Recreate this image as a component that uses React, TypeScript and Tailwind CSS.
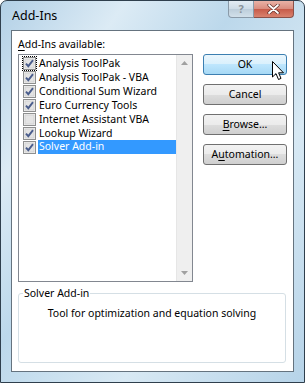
import React from "react";

interface AddIn {
  name: string;
  checked: boolean;
}

const addIns: AddIn[] = [
  { name: "Analysis ToolPak", checked: true },
  { name: "Analysis ToolPak - VBA", checked: true },
  { name: "Conditional Sum Wizard", checked: true },
  { name: "Euro Currency Tools", checked: true },
  { name: "Internet Assistant VBA", checked: false },
  { name: "Lookup Wizard", checked: true },
  { name: "Solver Add-in", checked: true },
];

function CheckBox({ checked }: { checked: boolean }) {
  return (
    <svg width="13" height="13" viewBox="0 0 13 13">
      <rect x="0.5" y="0.5" width="12" height="12" fill="#f6f6f6" stroke="#8e8f8f" />
      <rect x="2" y="2" width="9" height="9" fill="#e4e4e4" stroke="#d2d2d2" />
      {checked && (
        <path d="M3 6.6 L5.3 9.2 L10 3.2" fill="none" stroke="#4a5d8c" strokeWidth="1.9" />
      )}
    </svg>
  );
}

function Button({ children, focused }: { children: React.ReactNode; focused?: boolean }) {
  return (
    <button
      className={
        focused
          ? "h-[21px] w-[84px] rounded-[3px] border border-[#3c7fb1] bg-[linear-gradient(#eaf6fd,#d9f0fc_50%,#bee6fd_50%,#a7d9f5)] text-[10.5px] text-black"
          : "h-[21px] w-[84px] rounded-[3px] border border-[#707070] bg-[linear-gradient(#f2f2f2,#ebebeb_50%,#dddddd_50%,#cfcfcf)] text-[10.5px] text-black"
      }
    >
      {children}
    </button>
  );
}

export default function App() {
  return (
    <div className="w-[305px] h-[383px] overflow-hidden font-['Noto_Sans',sans-serif]">
      <div className="flex h-full flex-col rounded-t-[7px] border border-[#2f3f4d] bg-[linear-gradient(125deg,#b2d0e6_0%,#dcebf5_22%,#bcd8eb_42%,#d8e9f4_68%,#b6d3e8_100%)]">
        {/* Title bar */}
        <div className="flex h-[29px] shrink-0 items-start justify-between">
          <div className="pl-[11px] pt-[6px] text-[12.5px] text-black">Add-Ins</div>
          <div className="mr-[10px] flex">
            <div className="flex h-[17px] w-[26px] items-center justify-center rounded-bl-[4px] border border-t-0 border-[#8a9aa8] bg-[linear-gradient(#e3ecf3,#cddbe6_50%,#bccdda_50%,#d2e0ea)] text-[11px] font-bold text-[#8a9299]">
              ?
            </div>
            <div className="flex h-[17px] w-[40px] items-center justify-center rounded-br-[4px] border border-l-0 border-t-0 border-[#8a5048] bg-[linear-gradient(#e9b2a6,#d98c7e_50%,#c65a48_50%,#d9826e)]">
              <svg width="13" height="10" viewBox="0 0 13 10">
                <path d="M2 1 L11 9 M11 1 L2 9" stroke="#5a2a24" strokeWidth="3.2" strokeLinecap="round" />
                <path d="M2 1 L11 9 M11 1 L2 9" stroke="#ffffff" strokeWidth="1.8" strokeLinecap="round" />
              </svg>
            </div>
          </div>
        </div>

        {/* Client area */}
        <div className="mx-[10px] mb-[10px] flex flex-1 flex-col border border-[#65737f] bg-white px-[6px] pt-[6px] text-[10.5px] text-black">
          <div className="leading-[15px]">
            <span className="underline underline-offset-2">A</span>dd-Ins available:
          </div>
          <div className="mt-[2px] flex gap-[10px]">
            <div className="flex h-[228px] w-[176px] border border-[#828790]">
              <div className="flex-1 pt-[1px] pl-[3px]">
                {addIns.map((a, i) => (
                  <div key={a.name} className="flex h-[14px] items-center">
                    <div className={i === 0 ? "flex h-[15px] w-[15px] items-center justify-center outline-1 outline-dotted outline-black -outline-offset-1" : "flex h-[15px] w-[15px] items-center justify-center"}>
                      <CheckBox checked={a.checked} />
                    </div>
                    <div
                      className={
                        a.name === "Solver Add-in"
                          ? "ml-[1px] flex h-[14px] flex-1 items-center bg-[#3399ff] pl-[1px] text-white"
                          : "ml-[1px] pl-[1px] leading-[14px]"
                      }
                    >
                      {a.name}
                    </div>
                  </div>
                ))}
              </div>
              <div className="flex w-[16px] flex-col justify-between bg-[#efefef] border-l border-[#e6e6e6]">
                <div className="flex h-[16px] items-center justify-center">
                  <svg width="7" height="4" viewBox="0 0 7 4">
                    <path d="M0 4 L3.5 0 L7 4 Z" fill="#a0a0a0" />
                  </svg>
                </div>
                <div className="flex h-[16px] items-center justify-center">
                  <svg width="7" height="4" viewBox="0 0 7 4">
                    <path d="M0 0 L3.5 4 L7 0 Z" fill="#a0a0a0" />
                  </svg>
                </div>
              </div>
            </div>
            <div className="relative flex flex-col gap-[9px]">
              <Button focused>OK</Button>
              <Button>Cancel</Button>
              <Button>
                <span className="underline underline-offset-2">B</span>rowse...
              </Button>
              <Button>
                A<span className="underline underline-offset-2">u</span>tomation...
              </Button>
              <svg className="absolute left-[69px] top-[7px]" width="13" height="21" viewBox="0 0 13 21">
                <path
                  d="M0.5 0.5 L0.5 16 L4 12.6 L6.5 18.5 L9 17.4 L6.6 11.8 L11.5 11.8 Z"
                  fill="#ffffff"
                  stroke="#000000"
                  strokeWidth="1"
                  strokeLinejoin="round"
                />
              </svg>
            </div>
          </div>
          <fieldset className="mt-[5px] h-[76px] w-[268px] rounded-[3px] border border-[#d5dfe5] px-[4px]">
            <legend className="px-[1px] leading-[13px]">Solver Add-in</legend>
            <div className="pt-[6px] text-center">Tool for optimization and equation solving</div>
          </fieldset>
        </div>
      </div>
    </div>
  );
}
